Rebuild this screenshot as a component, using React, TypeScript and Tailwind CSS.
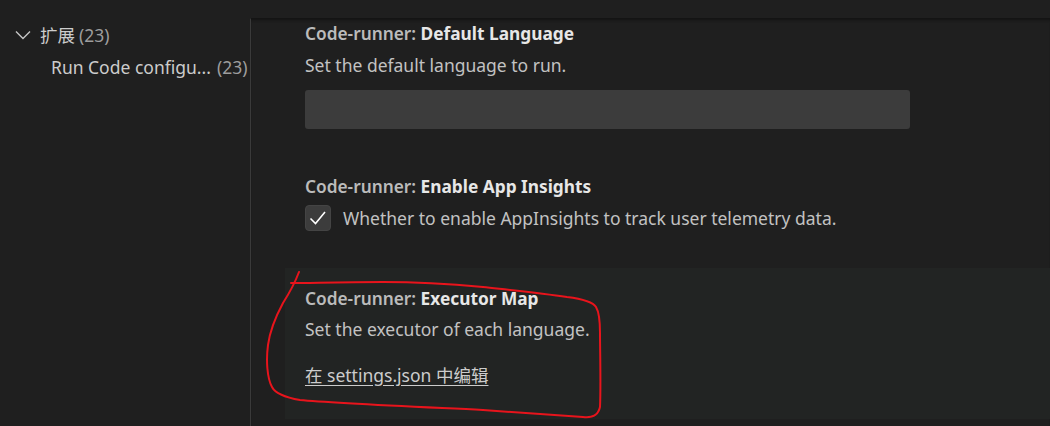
import React from "react";

const font = { fontFamily: '"Noto Sans", "Noto Sans CJK SC", sans-serif' };

export default function App() {
  return (
    <div
      className="relative flex w-[1050px] h-[426px] overflow-hidden bg-[#1f1f1f] text-[#cccccc]"
      style={font}
    >
      <aside className="w-[250px] shrink-0 pt-[24px] overflow-hidden">
        <div className="flex items-center h-[22px]">
          <svg
            className="ml-[15px] mr-[9px]"
            width="16"
            height="10"
            viewBox="0 0 16 10"
            fill="none"
            stroke="#c5c5c5"
            strokeWidth="1.4"
          >
            <path d="M1 1.5 L8 8.5 L15 1.5" />
          </svg>
          <span className="text-[17.5px] leading-[22px] text-[#cccccc]">扩展</span>
          <span className="ml-[4px] text-[17.5px] leading-[22px] text-[#9d9d9d]">(23)</span>
        </div>
        <div className="flex items-center h-[22px] mt-[10px] pl-[51px] whitespace-nowrap">
          <span className="text-[17.5px] leading-[22px] text-[#cccccc]">Run Code configu...</span>
          <span className="ml-[6px] text-[17.5px] leading-[22px] text-[#9d9d9d]">(23)</span>
        </div>
      </aside>

      <main className="flex-1 flex flex-col">
        <div className="h-[18px] shrink-0" />
        <div className="flex-1 border-l border-t border-l-[#3a3a3a] border-t-[#141414] shadow-[inset_0_3px_3px_-2px_#111111]">
          <section className="ml-[34px] pl-[20px] pt-[4px]">
            <div className="h-[22px] leading-[22px] text-[17.3px] whitespace-nowrap">
              <span className="font-semibold text-[#bbbbbb]">Code-runner: </span>
              <span className="font-bold text-[#e7e7e7]">Default Language</span>
            </div>
            <div className="mt-[9px] h-[22px] leading-[22px] text-[17.5px] text-[#c2c2c2]">
              Set the default language to run.
            </div>
            <div className="mt-[14px] w-[605px] h-[39px] rounded-[3px] bg-[#3c3c3c]" />
          </section>

          <section className="ml-[34px] pl-[20px] mt-[47px]">
            <div className="h-[22px] leading-[22px] text-[17.3px] whitespace-nowrap">
              <span className="font-semibold text-[#bbbbbb]">Code-runner: </span>
              <span className="font-bold text-[#e7e7e7]">Enable App Insights</span>
            </div>
            <div className="mt-[7px] flex items-center">
              <div className="w-[26px] h-[26px] rounded-[4px] bg-[#3c3c3c] border border-[#444444] flex items-center justify-center">
                <svg width="20" height="20" viewBox="0 0 20 20" fill="none" stroke="#ffffff" strokeWidth="1.6">
                  <path d="M2.5 10.5 L7.5 15.5 L17 4" />
                </svg>
              </div>
              <span className="ml-[12px] text-[17.5px] leading-[22px] text-[#c2c2c2]">
                Whether to enable AppInsights to track user telemetry data.
              </span>
            </div>
          </section>

          <section className="ml-[34px] pl-[20px] mt-[37px] h-[151px] pt-[20px] bg-[#222423]">
            <div className="h-[22px] leading-[22px] text-[17.3px] whitespace-nowrap">
              <span className="font-semibold text-[#bbbbbb]">Code-runner: </span>
              <span className="font-bold text-[#e7e7e7]">Executor Map</span>
            </div>
            <div className="mt-[8px] h-[22px] leading-[22px] text-[17.5px] text-[#c2c2c2]">
              Set the executor of each language.
            </div>
            <div className="mt-[24px] h-[22px] leading-[22px] text-[17.5px]">
              <a className="underline underline-offset-[3px] text-[#cccccc]">在 settings.json 中编辑</a>
            </div>
          </section>
        </div>
      </main>

      <svg
        className="absolute inset-0 pointer-events-none"
        width="1050"
        height="426"
        viewBox="0 0 1050 426"
        fill="none"
        stroke="#e8141c"
        strokeWidth="2"
        strokeLinecap="round"
        strokeLinejoin="round"
      >
        <path d="M299 272 C296 280 290 292 283 303 C276 316 270 330 268 345 C266 360 267 378 272 387 C275 393 283 397 300 400 C330 403 400 406 483 410 C530 413 565 416 583 417 C592 418 598 416 600 407 C601 385 600 350 600 333 C600 322 599 312 596 307 C593 302 583 299 567 297 C540 293 510 290 483 287 C440 283 400 282 383 282 C340 282 310 283 291 283" />
      </svg>
    </div>
  );
}
